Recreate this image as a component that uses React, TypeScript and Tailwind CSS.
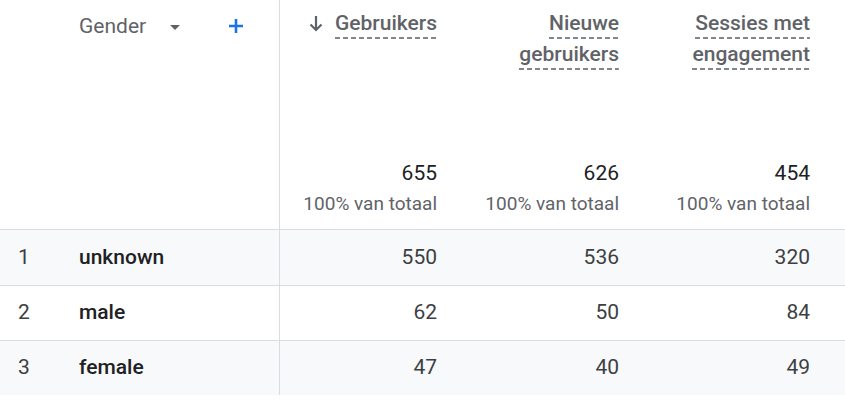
const rows = [
  { id: 1, label: "unknown", values: ["550", "536", "320"] },
  { id: 2, label: "male", values: ["62", "50", "84"] },
  { id: 3, label: "female", values: ["47", "40", "49"] },
];

const totals = ["655", "626", "454"];

const dashed =
  "pb-px bg-[repeating-linear-gradient(to_right,#80868b_0_5px,transparent_5px_8px)] bg-no-repeat bg-bottom bg-[length:100%_2px]";

// metric column widths / right padding
const cols = [
  "w-[173px] pr-[16px]",
  "w-[182px] pr-[16px]",
  "flex-1 pr-[35px]",
];

function ArrowDown() {
  return (
    <svg width="14" height="17" viewBox="0 0 14 17" fill="none" stroke="#5f6368" strokeWidth="2.2">
      <path d="M7 1v14M1.5 9.5L7 15l5.5-5.5" />
    </svg>
  );
}

function Caret() {
  return (
    <svg width="10" height="5" viewBox="0 0 10 5" fill="#5f6368">
      <path d="M0 0h10L5 5z" />
    </svg>
  );
}

function Plus() {
  return (
    <svg width="16" height="16" viewBox="0 0 16 16" fill="none" stroke="#1a73e8" strokeWidth="2.6">
      <path d="M8 1v14M1 8h14" />
    </svg>
  );
}

export default function App() {
  return (
    <div className="w-[845px] h-[401px] bg-white font-['Roboto',sans-serif] overflow-hidden">
      {/* Header */}
      <div className="flex h-[230px] border-b border-[#dadce0]">
        <div className="w-[280px] border-r border-[#dadce0] pl-[79px] pt-[11px]">
          <div className="flex items-center h-[30px]">
            <span className="text-[21px] leading-[30px] text-[#5f6368]">
              Gender
            </span>
            <span className="ml-[24px] mt-[2px]">
              <Caret />
            </span>
            <span className="ml-[48px] mt-[-1px]">
              <Plus />
            </span>
          </div>
        </div>

        <div className={`${cols[0]} flex flex-col items-end pt-[8px]`}>
          <div className="flex items-start">
            <span className="mt-[7px] mr-[12px]">
              <ArrowDown />
            </span>
            <span
              className={`text-[21px] leading-[30px] font-medium text-[#5f6368] ${dashed}`}
            >
              Gebruikers
            </span>
          </div>
          <Totals value={totals[0]} />
        </div>

        <div className={`${cols[1]} flex flex-col items-end pt-[8px]`}>
          <div className="flex flex-col items-end text-[21px] leading-[30px] font-medium text-[#5f6368]">
            <span className={dashed}>Nieuwe</span>
            <span className={dashed}>gebruikers</span>
          </div>
          <Totals value={totals[1]} />
        </div>

        <div className={`${cols[2]} flex flex-col items-end pt-[8px]`}>
          <div className="flex flex-col items-end text-[21px] leading-[30px] font-medium text-[#5f6368]">
            <span className={dashed}>Sessies met</span>
            <span className={dashed}>engagement</span>
          </div>
          <Totals value={totals[2]} />
        </div>
      </div>

      {/* Rows */}
      {rows.map((r, i) => (
        <div
          key={r.id}
          className={`flex h-[55px] ${i > 0 ? "border-t border-[#dadce0]" : ""} ${
            i % 2 === 0 ? "bg-[#f8f9fa]" : "bg-white"
          }`}
        >
          <div className="w-[280px] border-r border-[#dadce0] flex items-center text-[21px]">
            <span className="w-[79px] pl-[18px] text-[#3c4043]">{r.id}</span>
            <span className="font-medium text-[#202124]">{r.label}</span>
          </div>
          {r.values.map((v, j) => (
            <div
              key={j}
              className={`${cols[j]} flex items-center justify-end text-[21px] text-[#3c4043]`}
            >
              {v}
            </div>
          ))}
        </div>
      ))}
    </div>
  );
}

function Totals({ value }: { value: string }) {
  return (
    <div className="mt-auto mb-[10px] flex flex-col items-end">
      <span className="text-[21px] leading-[30px] text-[#202124]">
        {value}
      </span>
      <span className="text-[19px] leading-[30px] text-[#5f6368] mt-[1px]">
        100% van totaal
      </span>
    </div>
  );
}
